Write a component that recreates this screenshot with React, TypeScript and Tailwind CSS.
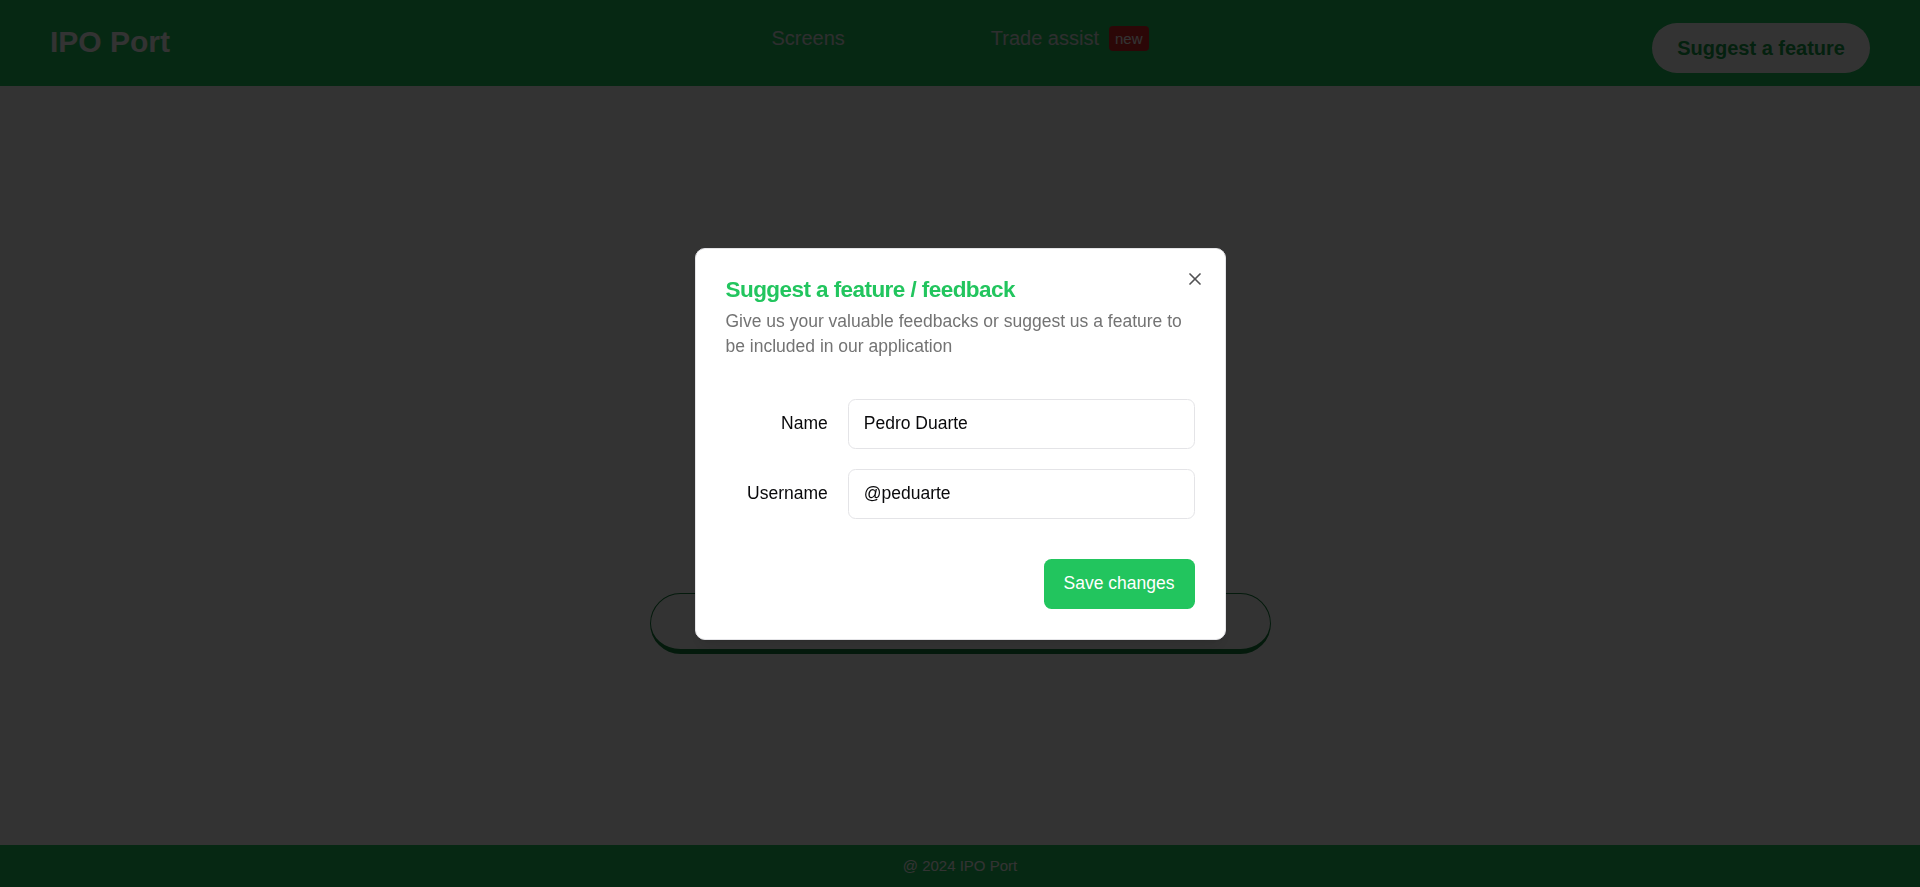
import { X } from "lucide-react";

const Header = () => {
  return (
    <header className="h-[86px] bg-[#22c55e] px-[50px] pt-[23px] grid grid-cols-3 items-start">
      <h1 className="mt-[1px] text-[30px] leading-[36px] font-bold text-white">IPO Port</h1>
      <nav className="flex justify-center items-center gap-[146px] mt-[1px] text-[20px] leading-[28px] text-[#e5e7eb]">
        <a className="cursor-pointer">Screens</a>
        <a className="flex items-center cursor-pointer">
          Trade assist
          <span className="ml-[10px] h-[25px] px-[6px] rounded-[4px] bg-[#dc2626] text-white text-[15px] leading-[25px]">
            new
          </span>
        </a>
      </nav>
      <div className="flex justify-end">
        <button className="h-[50px] px-[25px] rounded-full bg-white text-[#16a34a] text-[20px] font-bold">
          Suggest a feature
        </button>
      </div>
    </header>
  );
};

const Field = ({ label, value }: { label: string; value: string }) => (
  <div className="grid grid-cols-4 items-center gap-[20px]">
    <label className="text-right text-[17.5px] leading-none text-[#09090b]">{label}</label>
    <input
      className="col-span-3 h-[50px] rounded-[7.5px] border border-[#e4e4e7] bg-white px-[15px] text-[17.5px] text-[#09090b] outline-none"
      defaultValue={value}
    />
  </div>
);

const FeedbackDialog = () => {
  return (
    <div className="fixed inset-0 flex items-center justify-center">
      <div className="relative w-[531px] grid gap-[20px] p-[30px] bg-white border border-[#e4e4e7] rounded-[10px] shadow-lg">
        <div className="flex flex-col gap-[7.5px]">
          <h2 className="text-[22.5px] leading-none font-bold tracking-tight text-[#22c55e]">
            Suggest a feature / feedback
          </h2>
          <p className="text-[17.5px] leading-[25px] text-[#737373]">
            Give us your valuable feedbacks or suggest us a feature to be included in our application
          </p>
        </div>
        <div className="grid gap-[20px] py-[20px]">
          <Field label="Name" value="Pedro Duarte" />
          <Field label="Username" value="@peduarte" />
        </div>
        <div className="flex justify-end">
          <button className="h-[50px] px-[20px] rounded-[7.5px] bg-[#22c55e] text-white text-[17.5px] font-medium">
            Save changes
          </button>
        </div>
        <button className="absolute right-[20px] top-[20px] opacity-70 text-[#09090b]">
          <X className="w-[20px] h-[20px]" strokeWidth={2} />
        </button>
      </div>
    </div>
  );
};

export default function App() {
  return (
    <div className="relative min-h-screen flex flex-col bg-white font-['Liberation_Sans',Arial,sans-serif]">
      <Header />
      <main className="flex-1 flex justify-center pt-[507px]">
        <div className="w-[621px] h-[61px] rounded-full border border-b-[5px] border-[#15803d] bg-white"></div>
      </main>
      <footer className="h-[42px] bg-[#22c55e] flex items-center justify-center text-[15px] text-white">
        @ 2024 IPO Port
      </footer>
      <div className="fixed inset-0 bg-black/80"></div>
      <FeedbackDialog />
    </div>
  );
}
